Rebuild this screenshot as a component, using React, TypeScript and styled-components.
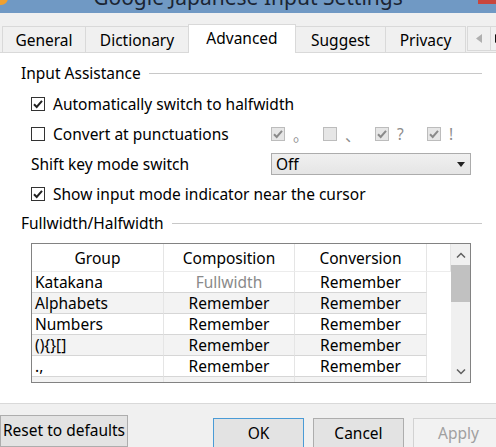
import styled, { createGlobalStyle } from 'styled-components';

const GlobalStyle = createGlobalStyle`
  html, body {
    margin: 0;
    padding: 0;
    background: #f0f0f0;
    overflow: hidden;
  }
  body {
    font-family: "Noto Sans", "Liberation Sans", sans-serif;
    font-size: 15.5px;
    color: #000;
  }
`;

const Window = styled.div`
  width: 496px;
  height: 447px;
  overflow: hidden;
  display: flex;
  flex-direction: column;
  background: #f0f0f0;
`;

const TitleBar = styled.div`
  height: 13px;
  flex: none;
  background: #7099c4;
  display: grid;
  grid-template-columns: 18px 1fr 18px;
  overflow: hidden;
`;

const AppIcon = styled.div`
  width: 14px;
  height: 14px;
  margin: -9px 0 0 -6px;
  border-radius: 50%;
  background: #f0a030;
`;

const TitleText = styled.div`
  font-size: 21px;
  line-height: 20px;
  margin-top: -13px;
  text-align: center;
  color: #1b2533;
  white-space: nowrap;
`;

const CloseBox = styled.div`
  height: 4px;
  background: #c9463d;
`;

const TabStrip = styled.div`
  margin-top: 11px;
  height: 28px;
  flex: none;
  display: flex;
  align-items: flex-end;
  padding-left: 2px;
  position: relative;
  z-index: 1;
`;

const Tab = styled.div<{ $w: number; $active?: boolean }>`
  width: ${p => p.$w}px;
  height: ${p => (p.$active ? 29 : 26)}px;
  box-sizing: border-box;
  margin-left: -1px;
  border: 1px solid #d9d9d9;
  border-bottom: none;
  background: ${p => (p.$active ? '#fff' : '#f0f0f0')};
  margin-bottom: ${p => (p.$active ? -1 : 0)}px;
  display: flex;
  align-items: center;
  justify-content: center;
  padding-bottom: ${p => (p.$active ? 3 : 0)}px;
  white-space: nowrap;
  flex: none;
  &:first-child {
    margin-left: 0;
  }
`;

const TabScroller = styled.div`
  margin-left: 1px;
  height: 25px;
  margin-bottom: 1px;
  display: flex;
  border: 1px solid #d9d9d9;
  box-sizing: border-box;
  background: #f0f0f0;
  flex: none;
`;

const ScrollHalf = styled.div<{ $w: number }>`
  width: ${p => p.$w}px;
  display: flex;
  align-items: center;
  justify-content: center;
  & + & {
    border-left: 1px solid #d9d9d9;
  }
`;

const Panel = styled.div`
  height: 340px;
  flex: none;
  background: #fff;
  border-top: 1px solid #d9d9d9;
  border-bottom: 1px solid #d9d9d9;
  padding-top: 10px;
  box-sizing: content-box;
  overflow: hidden;
`;

const GroupHeader = styled.div<{ $top: number }>`
  height: 20px;
  margin-top: ${p => p.$top}px;
  display: flex;
  align-items: center;
  padding-left: 21px;
  padding-right: 14px;
  white-space: nowrap;
  &::after {
    content: '';
    flex: 1;
    height: 1px;
    background: #c8c8c8;
    margin-left: 8px;
  }
`;

const OptionRow = styled.div`
  height: 30px;
  display: flex;
  align-items: center;
  padding-left: 31px;
  white-space: nowrap;
`;

const LeftPart = styled.div`
  width: 240px;
  display: flex;
  align-items: center;
  flex: none;
`;

const Box = styled.span<{ $disabled?: boolean }>`
  width: 14px;
  height: 14px;
  box-sizing: border-box;
  border: 1px solid ${p => (p.$disabled ? '#bcbcbc' : '#333')};
  background: ${p => (p.$disabled ? '#e6e6e6' : '#fff')};
  display: inline-flex;
  align-items: center;
  justify-content: center;
  flex: none;
  margin-right: 8px;
`;

const PunctGroup = styled.div`
  display: flex;
  align-items: center;
`;

const PunctItem = styled.div`
  width: 52px;
  display: flex;
  align-items: center;
  color: #8c8c8c;
  font-family: "Noto Sans", "Noto Sans CJK JP", sans-serif;
`;

const Select = styled.div`
  width: 200px;
  height: 22px;
  box-sizing: border-box;
  border: 1px solid #acacac;
  background: linear-gradient(#f0f0f0, #e5e5e5);
  display: flex;
  align-items: center;
  justify-content: space-between;
  padding: 0 5px 0 4px;
`;

const TableFrame = styled.div`
  margin: 10px 0 0 31px;
  width: 440px;
  height: 140px;
  box-sizing: border-box;
  border: 1px solid #828282;
  display: flex;
  overflow: hidden;
`;

const Grid = styled.div`
  flex: 1;
  display: grid;
  grid-template-columns: 132px 131px 132px 1fr;
  grid-auto-rows: 21px;
  grid-template-rows: 28px;
  align-content: start;
`;

const HeadCell = styled.div`
  display: flex;
  align-items: center;
  justify-content: center;
  border-right: 1px solid #e5e5e5;
  border-bottom: 1px solid #ececec;
`;

const Cell = styled.div<{ $shade?: boolean; $left?: boolean; $dim?: boolean }>`
  display: flex;
  align-items: center;
  justify-content: ${p => (p.$left ? 'flex-start' : 'center')};
  padding-left: ${p => (p.$left ? 3 : 0)}px;
  background: ${p => (p.$shade ? '#f3f3f3' : '#fff')};
  color: ${p => (p.$dim ? '#8a8a8a' : '#000')};
  border-right: 1px solid #e5e5e5;
  border-bottom: 1px solid #d6d6d6;
  white-space: nowrap;
  box-sizing: border-box;
`;

const EmptyCell = styled.div`
  background: #fff;
`;

const ScrollBar = styled.div`
  width: 19px;
  flex: none;
  background: #f0f0f0;
  display: flex;
  flex-direction: column;
  align-items: center;
`;

const Arrow = styled.div`
  height: 21px;
  width: 100%;
  display: flex;
  align-items: center;
  justify-content: center;
`;

const Thumb = styled.div`
  width: 100%;
  height: 37px;
  background: #c1c1c1;
`;

const Spacer = styled.div`
  flex: 1;
`;

const Footer = styled.div`
  flex: 1;
  display: flex;
  align-items: flex-start;
  overflow: hidden;
`;

const Button = styled.div<{ $w: number; $top: number; $left?: number; $focus?: boolean; $disabled?: boolean }>`
  width: ${p => p.$w}px;
  height: 32px;
  margin-top: ${p => p.$top}px;
  margin-left: ${p => p.$left ?? 0}px;
  box-sizing: border-box;
  flex: none;
  border: 1px solid ${p => (p.$focus ? '#4a9bd6' : p.$disabled ? '#d2d2d2' : '#adadad')};
  background: ${p => (p.$disabled ? '#f2f2f2' : '#e3e3e3')};
  color: ${p => (p.$disabled ? '#a0a0a0' : '#000')};
  display: flex;
  align-items: center;
  justify-content: center;
  padding-bottom: 3px;
  white-space: nowrap;
`;

const Check = ({ color }: { color: string }) => (
  <svg width="12" height="12" viewBox="0 0 12 12">
    <path d="M2 6.2 L4.7 9 L10 2.8" fill="none" stroke={color} strokeWidth="2" />
  </svg>
);

const CheckBox = ({ checked, disabled }: { checked?: boolean; disabled?: boolean }) => (
  <Box $disabled={disabled}>{checked && <Check color={disabled ? '#8a8a8a' : '#222'} />}</Box>
);

const rows = [
  ['Katakana', 'Fullwidth', 'Remember'],
  ['Alphabets', 'Remember', 'Remember'],
  ['Numbers', 'Remember', 'Remember'],
  ['(){}[]', 'Remember', 'Remember'],
  ['.,', 'Remember', 'Remember'],
  ['', '', ''],
];

const punct = [
  { mark: '。', on: true },
  { mark: '、', on: false },
  { mark: '?', on: true },
  { mark: '!', on: true },
];

export default function App() {
  return (
    <>
      <GlobalStyle />
      <Window>
        <TitleBar>
          <AppIcon />
          <TitleText>Google Japanese Input Settings</TitleText>
          <CloseBox />
        </TitleBar>
        <TabStrip>
          <Tab $w={84}>General</Tab>
          <Tab $w={104}>Dictionary</Tab>
          <Tab $w={108} $active>Advanced</Tab>
          <Tab $w={91}>Suggest</Tab>
          <Tab $w={81}>Privacy</Tab>
          <TabScroller>
            <ScrollHalf $w={22}>
              <svg width="6" height="9" viewBox="0 0 6 9">
                <path d="M6 0 L0 4.5 L6 9 Z" fill="#b0b0b0" />
              </svg>
            </ScrollHalf>
            <ScrollHalf $w={14}>
              <svg width="6" height="9" viewBox="0 0 6 9">
                <path d="M0 0 L6 4.5 L0 9 Z" fill="#111" />
              </svg>
            </ScrollHalf>
          </TabScroller>
        </TabStrip>
        <Panel>
          <GroupHeader $top={0}>Input Assistance</GroupHeader>
          <OptionRow style={{ marginTop: 6 }}>
            <CheckBox checked />
            Automatically switch to halfwidth
          </OptionRow>
          <OptionRow>
            <LeftPart>
              <CheckBox />
              Convert at punctuations
            </LeftPart>
            <PunctGroup>
              {punct.map(p => (
                <PunctItem key={p.mark}>
                  <CheckBox checked={p.on} disabled />
                  <span>{p.mark}</span>
                </PunctItem>
              ))}
            </PunctGroup>
          </OptionRow>
          <OptionRow>
            <LeftPart>Shift key mode switch</LeftPart>
            <Select>
              <span>Off</span>
              <svg width="8" height="5" viewBox="0 0 8 5">
                <path d="M0 0 L8 0 L4 5 Z" fill="#222" />
              </svg>
            </Select>
          </OptionRow>
          <OptionRow>
            <CheckBox checked />
            Show input mode indicator near the cursor
          </OptionRow>
          <GroupHeader $top={4}>Fullwidth/Halfwidth</GroupHeader>
          <TableFrame>
            <Grid>
              <HeadCell>Group</HeadCell>
              <HeadCell>Composition</HeadCell>
              <HeadCell>Conversion</HeadCell>
              <HeadCell />
              {rows.map((r, i) => {
                const shade = i % 2 === 1;
                return [
                  <Cell key={`g${i}`} $left $shade={shade}>{r[0]}</Cell>,
                  <Cell key={`c${i}`} $shade={shade} $dim={i === 0}>{r[1]}</Cell>,
                  <Cell key={`v${i}`} $shade={shade}>{r[2]}</Cell>,
                  <EmptyCell key={`e${i}`} />,
                ];
              })}
            </Grid>
            <ScrollBar>
              <Arrow>
                <svg width="10" height="6" viewBox="0 0 10 6">
                  <path d="M1 5.5 L5 1.5 L9 5.5" fill="none" stroke="#606060" strokeWidth="1.5" />
                </svg>
              </Arrow>
              <Thumb />
              <Spacer />
              <Arrow>
                <svg width="10" height="6" viewBox="0 0 10 6">
                  <path d="M1 0.5 L5 4.5 L9 0.5" fill="none" stroke="#606060" strokeWidth="1.5" />
                </svg>
              </Arrow>
            </ScrollBar>
          </TableFrame>
        </Panel>
        <Footer>
          <Button $w={128} $top={11}>Reset to defaults</Button>
          <Button $w={91} $top={14} $left={85} $focus>OK</Button>
          <Button $w={91} $top={14} $left={9}>Cancel</Button>
          <Button $w={91} $top={14} $left={9} $disabled>Apply</Button>
        </Footer>
      </Window>
    </>
  );
}
